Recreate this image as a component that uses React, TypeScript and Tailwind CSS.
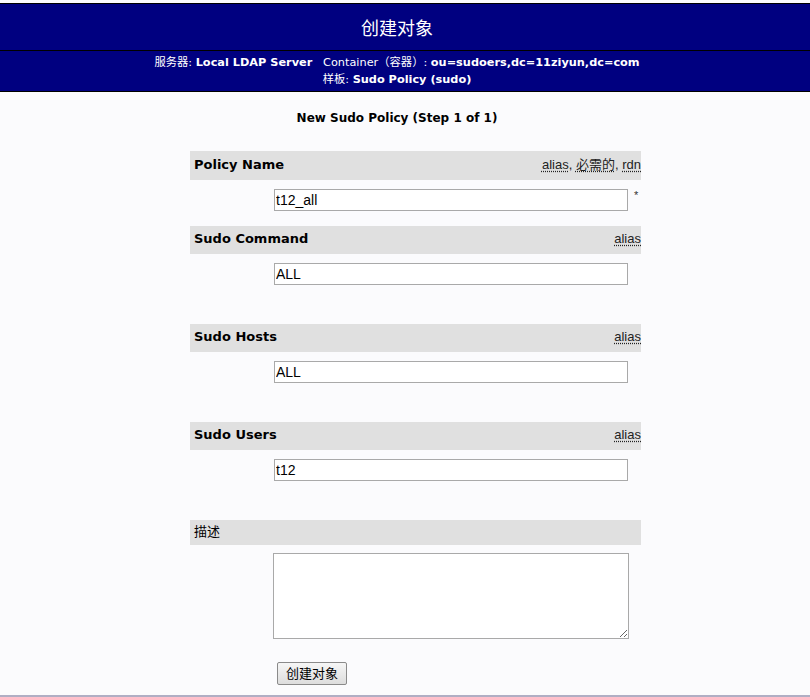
import React from "react";

const sans = "font-['DejaVu_Sans','Noto_Sans_CJK_SC',sans-serif]";
const arial = "font-['Liberation_Sans','Noto_Sans_CJK_SC',sans-serif]";

function Header({
  label,
  flags,
  tall,
  bold = true,
}: {
  label: string;
  flags?: string[];
  tall?: boolean;
  bold?: boolean;
}) {
  return (
    <div
      className={`flex items-center justify-between bg-[#e0e0e0] pb-[2px] pl-[4px] ${
        tall ? "h-[29px]" : bold ? "h-[28px]" : "h-[25px]"
      }`}
    >
      <span className={`text-[13px] text-black ${bold ? "font-bold" : ""}`}>{label}</span>
      {flags && (
        <span className={`${arial} text-[13px] text-[#222]`}>
          {flags.map((f, i) => (
            <React.Fragment key={f}>
              {i > 0 && ", "}
              <span className="underline decoration-dotted underline-offset-2">{f}</span>
            </React.Fragment>
          ))}
        </span>
      )}
    </div>
  );
}

function Field({ value, required }: { value: string; required?: boolean }) {
  return (
    <div className="flex items-start pl-[84px] pt-[9px]">
      <input
        readOnly
        value={value}
        className={`${arial} h-[22px] w-[354px] border border-[#a9a9a9] bg-white px-[1px] text-[14px] text-black outline-none`}
      />
      {required && <span className={`${arial} ml-[6px] mt-[1px] text-[11px] leading-[11px] text-[#333]`}>*</span>}
    </div>
  );
}

export default function App() {
  return (
    <div className={`${sans} min-h-[697px] bg-[#fbfbfd] pt-[3px]`}>
      <div className="flex h-[48px] items-center justify-center border-y border-black bg-[#000080] pr-[16px] text-[18px] text-white">
        <span className="font-['Noto_Sans_CJK_SC',sans-serif]">创建对象</span>
      </div>
      <div className="flex h-[41px] flex-col items-center justify-center border-b border-black bg-[#000080] pr-[16px] text-[11.3px] leading-[17px] text-white">
        <div>
          服务器: <b>Local LDAP Server</b>&nbsp;&nbsp; Container（容器）: <b>ou=sudoers,dc=11ziyun,dc=com</b>
        </div>
        <div>
          样板: <b>Sudo Policy (sudo)</b>
        </div>
      </div>

      <div className="pr-[16px] pt-[18px] text-center text-[12px] font-bold leading-[16px] text-black">
        New Sudo Policy (Step 1 of 1)
      </div>

      <div className="ml-[190px] mt-[25px] w-[451px]">
        <Header label="Policy Name" flags={["alias", "必需的", "rdn"]} tall />
        <Field value="t12_all" required />

        <div className="mt-[15px]">
          <Header label="Sudo Command" flags={["alias"]} />
          <Field value="ALL" />
        </div>

        <div className="mt-[39px]">
          <Header label="Sudo Hosts" flags={["alias"]} />
          <Field value="ALL" />
        </div>

        <div className="mt-[39px]">
          <Header label="Sudo Users" flags={["alias"]} />
          <Field value="t12" />
        </div>

        <div className="mt-[39px]">
          <Header label="描述" bold={false} />
          <div className="pl-[83px] pt-[8px]">
            <textarea className="block h-[86px] w-[356px] border border-[#a9a9a9] bg-white outline-none" />
          </div>
          <div className="pl-[87px] pt-[22px]">
            <button className="h-[23px] w-[70px] rounded-[2px] border border-[#8a8a8a] bg-gradient-to-b from-[#f6f6f6] to-[#dddddd] text-[13px] text-black">
              创建对象
            </button>
          </div>
        </div>
      </div>

      <div className="mt-[10px] h-[2px] bg-[#b0aec4]" />
    </div>
  );
}
